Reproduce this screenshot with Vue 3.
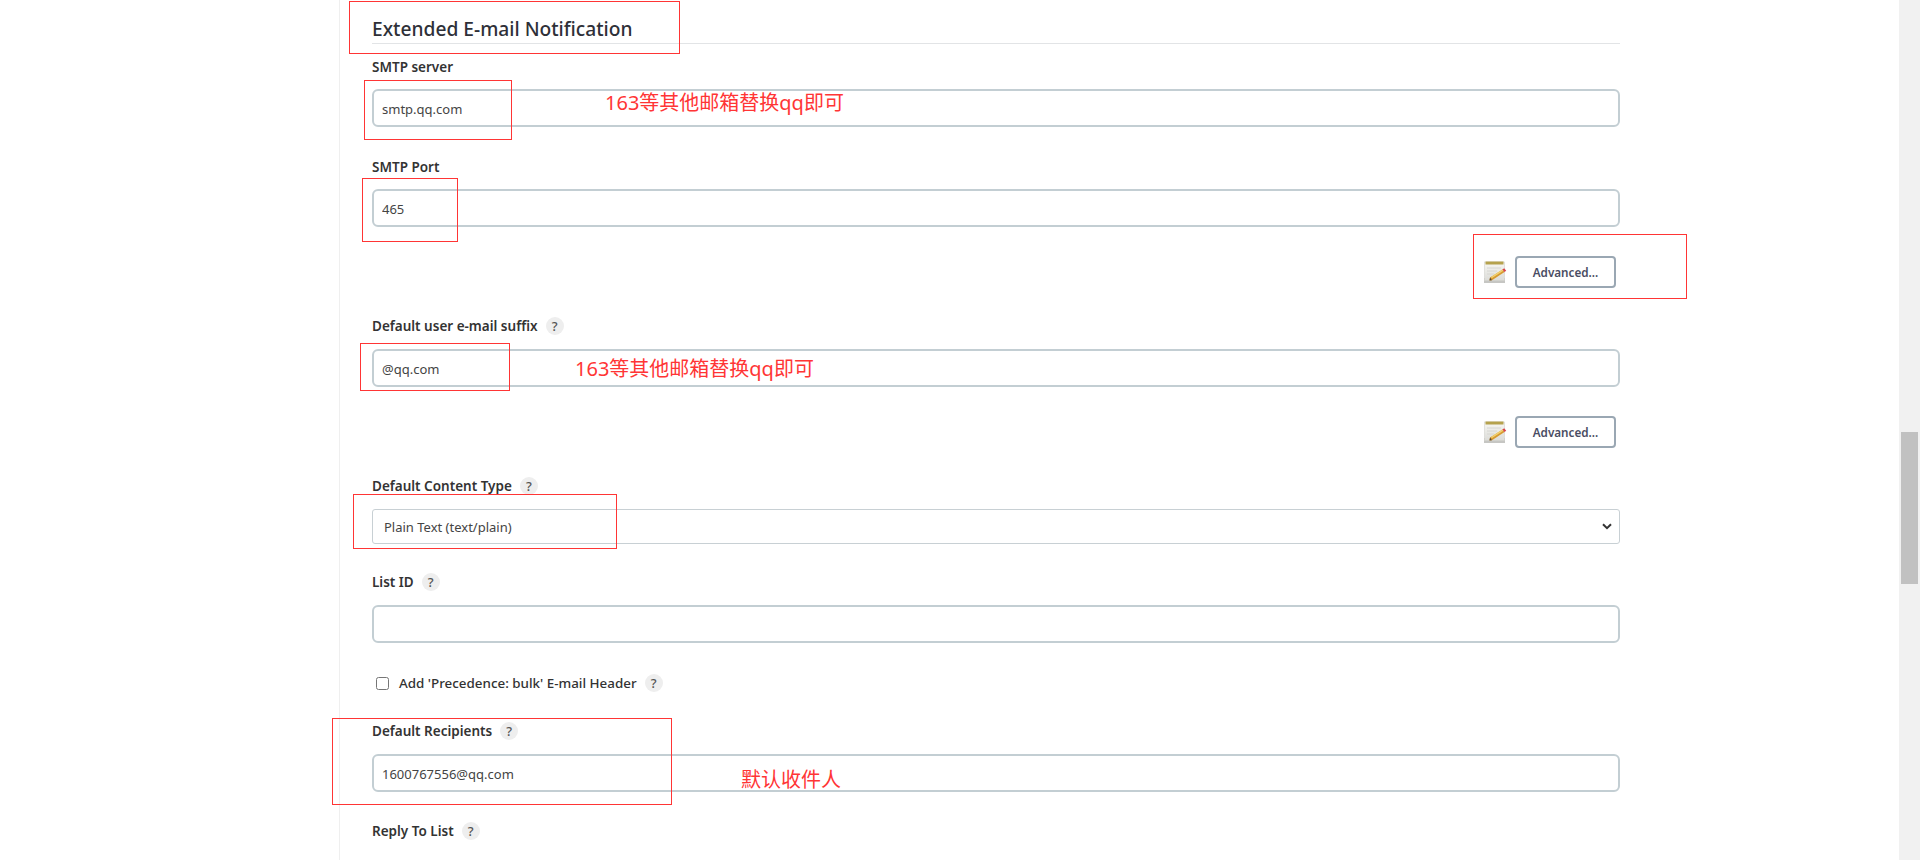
<script setup>
const notes = [
  { text: '163等其他邮箱替换qq即可', x: 605, y: 90 },
  { text: '163等其他邮箱替换qq即可', x: 575, y: 356 },
  { text: '默认收件人', x: 741, y: 767 },
]

// red boxes drawn over the screenshot
const boxes = [
  { x: 349, y: 1, w: 331, h: 53 },
  { x: 364, y: 80, w: 148, h: 60 },
  { x: 362, y: 178, w: 96, h: 64 },
  { x: 1473, y: 234, w: 214, h: 65 },
  { x: 360, y: 343, w: 150, h: 48 },
  { x: 353, y: 494, w: 264, h: 55 },
  { x: 332, y: 718, w: 340, h: 87 },
]

function boxStyle(b) {
  return { left: b.x + 'px', top: b.y + 'px', width: b.w + 'px', height: b.h + 'px' }
}
</script>

<template>
  <div class="page">
    <div class="main">
      <div class="section">
        <h3 class="section-title">Extended E-mail Notification</h3>

        <div class="field">
          <div class="label-row"><label class="form-label">SMTP server</label></div>
          <input class="form-input" value="smtp.qq.com">
        </div>
        <div class="field port">
          <div class="label-row"><label class="form-label">SMTP Port</label></div>
          <input class="form-input" value="465">
        </div>

        <div class="advanced-row">
          <svg class="note-icon" viewBox="0 0 24 24" width="24" height="24">
            <defs>
              <filter id="soft" x="-10%" y="-10%" width="120%" height="120%">
                <feGaussianBlur stdDeviation="0.35" />
              </filter>
              <linearGradient id="page" x1="0" y1="0" x2="0" y2="1">
                <stop offset="0" stop-color="#f7f7f3" />
                <stop offset="1" stop-color="#dcdcd8" />
              </linearGradient>
            </defs>
            <g filter="url(#soft)">
              <rect x="1" y="18" width="21" height="5" fill="#c6c6c3" />
              <rect x="1.5" y="2" width="20" height="18.5" fill="url(#page)" stroke="#d2d2ce" stroke-width="0.6" />
              <rect x="2.5" y="1.5" width="18" height="3" fill="#b5a24e" />
              <path d="M4 8h14M4 11h10M4 14h7" stroke="#d6d6d2" stroke-width="1" />
              <path d="M7 17.5l12.5-8 2 2.6L9 20.2 6.5 20.5z" fill="#d69a30" />
              <path d="M8 17l11.5-7.4 0.9 1.2-11.7 7.4z" fill="#f2d272" />
              <path d="M19.4 9.6l1.8-1.3 2 2.5-1.7 1.3z" fill="#d8444a" />
              <path d="M7 17.5l2 2.7-2.5 0.3z" fill="#5c4a34" />
            </g>
          </svg>
          <button class="btn-advanced">Advanced...</button>
        </div>

        <div class="field">
          <div class="label-row tip">
            <label class="form-label">Default user e-mail suffix</label>
            <span class="help">?</span>
          </div>
          <input class="form-input" value="@qq.com">
        </div>

        <div class="advanced-row">
          <svg class="note-icon" viewBox="0 0 24 24" width="24" height="24">
            <g filter="url(#soft)">
              <rect x="1" y="18" width="21" height="5" fill="#c6c6c3" />
              <rect x="1.5" y="2" width="20" height="18.5" fill="url(#page)" stroke="#d2d2ce" stroke-width="0.6" />
              <rect x="2.5" y="1.5" width="18" height="3" fill="#b5a24e" />
              <path d="M4 8h14M4 11h10M4 14h7" stroke="#d6d6d2" stroke-width="1" />
              <path d="M7 17.5l12.5-8 2 2.6L9 20.2 6.5 20.5z" fill="#d69a30" />
              <path d="M8 17l11.5-7.4 0.9 1.2-11.7 7.4z" fill="#f2d272" />
              <path d="M19.4 9.6l1.8-1.3 2 2.5-1.7 1.3z" fill="#d8444a" />
              <path d="M7 17.5l2 2.7-2.5 0.3z" fill="#5c4a34" />
            </g>
          </svg>
          <button class="btn-advanced">Advanced...</button>
        </div>

        <div class="field">
          <div class="label-row tip">
            <label class="form-label">Default Content Type</label>
            <span class="help">?</span>
          </div>
          <div class="form-select">
            <span>Plain Text (text/plain)</span>
            <svg viewBox="0 0 10 7" width="10" height="7">
              <path d="M1 1.2l4 4 4-4" fill="none" stroke="#333" stroke-width="2" />
            </svg>
          </div>
        </div>

        <div class="field">
          <div class="label-row tip">
            <label class="form-label">List ID</label>
            <span class="help">?</span>
          </div>
          <input class="form-input" value="">
        </div>

        <div class="check-row">
          <input type="checkbox" class="check">
          <span class="check-label">Add 'Precedence: bulk' E-mail Header</span>
          <span class="help">?</span>
        </div>

        <div class="field">
          <div class="label-row tip">
            <label class="form-label">Default Recipients</label>
            <span class="help">?</span>
          </div>
          <input class="form-input" value="1600767556@qq.com">
        </div>

        <div class="label-row tip reply">
          <label class="form-label">Reply To List</label>
          <span class="help">?</span>
        </div>
      </div>

      <div v-for="b in boxes" :key="b.x" class="red-box" :style="boxStyle(b)"></div>
      <span
        v-for="n in notes"
        :key="n.x"
        class="red-note"
        :style="{ left: n.x + 'px', top: n.y + 'px' }"
      >{{ n.text }}</span>
    </div>

    <div class="scrollbar">
      <div class="thumb"></div>
    </div>
  </div>
</template>

<style scoped>
.page {
  display: flex;
  height: 860px;
  overflow: hidden;
  background: #fff;
  color: #333;
  font-family: "Noto Sans", "Noto Sans CJK SC", sans-serif;
}
.main {
  position: relative;
  flex: 1;
  min-width: 0;
}
.section {
  box-sizing: border-box;
  width: 1281px;
  height: 860px;
  margin-left: 339px;
  padding-left: 32px;
  border-left: 1px solid #efefef;
  overflow: hidden;
}
.section-title {
  height: 44px;
  margin: 0;
  padding-top: 16px;
  box-sizing: border-box;
  border-bottom: 1px solid #e2e4e6;
  font-size: 19.2px;
  line-height: 26px;
  font-weight: 500;
  color: #2e3038;
}
.field {
  margin-top: 29px;
}
.section-title + .field {
  margin-top: 13px;
}
.field.port {
  margin-top: 30px;
}
.label-row {
  display: flex;
  align-items: center;
  box-sizing: border-box;
  height: 20px;
  gap: 8px;
}
.label-row.tip {
  padding-bottom: 2px;
}
.form-label {
  font-size: 13.5px;
  font-weight: 600;
  color: #333;
}
.help {
  display: flex;
  align-items: center;
  justify-content: center;
  width: 18px;
  height: 18px;
  border-radius: 50%;
  background: #eee;
  font-size: 13px;
  font-weight: 500;
  color: #555;
}
.form-input {
  display: block;
  box-sizing: border-box;
  width: 100%;
  height: 38px;
  margin-top: 12px;
  padding: 2px 8px 0;
  border: 2px solid #c3ced3;
  border-radius: 6px;
  background: #fff;
  outline: none;
  font-family: inherit;
  font-size: 13px;
  color: #444;
}
.advanced-row {
  display: flex;
  justify-content: flex-end;
  align-items: center;
  gap: 8px;
  margin-top: 29px;
  padding-right: 4px;
}
.note-icon {
  flex: none;
}
.btn-advanced {
  box-sizing: border-box;
  width: 101px;
  height: 32px;
  padding: 0;
  border: 2px solid #9aa7b3;
  border-radius: 4px;
  background: #fff;
  font-family: inherit;
  font-size: 11.7px;
  font-weight: 600;
  color: #4a4d63;
}
.form-select {
  display: flex;
  align-items: center;
  justify-content: space-between;
  box-sizing: border-box;
  height: 35px;
  margin-top: 12px;
  padding: 0 7px 0 11px;
  border: 1px solid #c8d0d4;
  border-radius: 3px;
  font-size: 13px;
  color: #444;
}
.check-row {
  display: flex;
  align-items: center;
  height: 20px;
  margin-top: 30px;
  padding-left: 4px;
}
.check {
  width: 13px;
  height: 13px;
  margin: 0 10px 0 0;
}
.check-label {
  margin-right: 8px;
  font-size: 13.4px;
  font-weight: 500;
  color: #333;
}
.reply {
  margin-top: 30px;
}
.scrollbar {
  position: relative;
  flex: none;
  width: 21px;
  background: #f1f1f1;
}
.thumb {
  position: absolute;
  top: 432px;
  left: 2px;
  width: 17px;
  height: 152px;
  background: #c1c1c1;
}
.red-box {
  position: absolute;
  box-sizing: border-box;
  border: 1px solid #ff3535;
  pointer-events: none;
}
.red-note {
  position: absolute;
  font-size: 20px;
  line-height: 26px;
  color: #ff3535;
  white-space: nowrap;
}
</style>
